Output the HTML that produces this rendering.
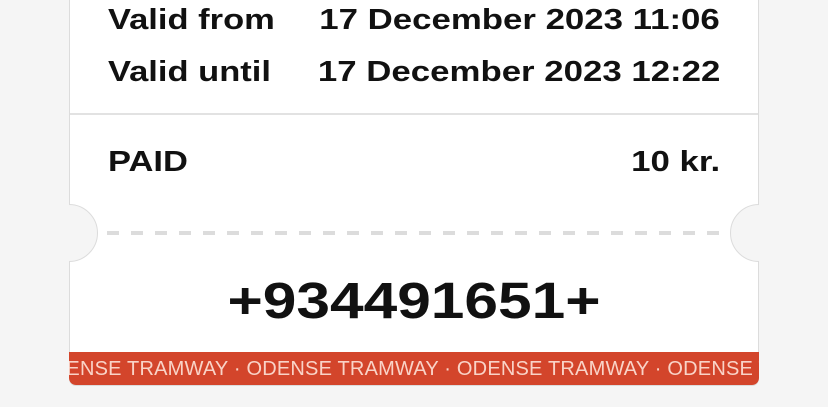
<!DOCTYPE html>
<html><head><meta charset="utf-8"><style>
html,body{margin:0;padding:0;}
body{width:828px;height:407px;background:#f5f5f5;position:relative;overflow:hidden;font-family:"Liberation Sans",sans-serif;color:#111;}
.card{position:absolute;left:69px;top:-10px;width:688px;height:395px;background:#fff;border:1px solid #dcdcdc;border-top:none;border-radius:0 0 7px 7px;overflow:hidden;}
.t{position:absolute;font-weight:bold;white-space:nowrap;}
.l{transform:scaleX(1.19);transform-origin:left center;}
.r{transform:scaleX(1.2);transform-origin:right center;}
.notch{position:absolute;width:58px;height:58px;border-radius:50%;background:#f5f5f5;border:1px solid #dcdcdc;box-sizing:border-box;top:204px;}
.band{position:absolute;left:69px;top:352px;width:690px;height:33px;background:#d3452b;border-radius:0 0 7px 7px;overflow:hidden;color:#f9d3c7;font-size:20px;line-height:34px;white-space:nowrap;letter-spacing:0.2px;}
</style></head><body>
<div class="card"></div>
<div style="position:absolute;left:70px;top:113px;width:688px;height:2px;background:#e2e2e2"></div>
<div class="t l" style="left:108px;top:4px;font-size:29px;">Valid from</div>
<div class="t l" style="left:108px;top:56px;font-size:29px;">Valid until</div>
<div class="t r" style="right:108px;top:4px;font-size:29px;">17 December 2023 11:06</div>
<div class="t r" style="right:108px;top:56px;font-size:29px;">17 December 2023 12:22</div>
<div class="t l" style="left:108px;top:146px;font-size:29px;">PAID</div>
<div class="t r" style="right:108px;top:146px;font-size:29px;">10 kr.</div>
<div style="position:absolute;left:107px;top:231px;width:614px;height:4px;background:repeating-linear-gradient(90deg,#dcdcdc 0 12px,transparent 12px 24px);"></div>
<div class="notch" style="left:40px;clip-path:inset(0 0 0 29px)"></div>
<div class="notch" style="left:730px;clip-path:inset(0 29px 0 0)"></div>
<div class="t" style="left:0;width:828px;text-align:center;top:271px;font-size:51px;transform:scaleX(1.185);transform-origin:414px center;">+934491651+</div>
<div class="band"><span style="margin-left:-33px">ODENSE TRAMWAY · ODENSE TRAMWAY · ODENSE TRAMWAY · ODENSE TRAMWAY</span></div>
</body></html>
